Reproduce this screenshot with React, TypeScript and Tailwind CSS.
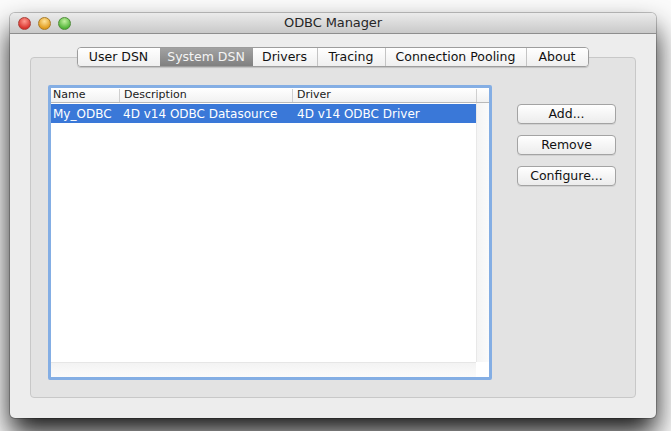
import React from "react";

const font = { fontFamily: '"DejaVu Sans", "Lucida Grande", sans-serif' };

function Light({ from, to, border }: { from: string; to: string; border: string }) {
  return (
    <div
      className="w-[13px] h-[13px] rounded-full"
      style={{
        background: `radial-gradient(circle at 50% 30%, ${from} 0%, ${to} 75%)`,
        border: `1px solid ${border}`,
      }}
    />
  );
}

const tabs = ["User DSN", "System DSN", "Drivers", "Tracing", "Connection Pooling", "About"];
const tabW = [82, 93, 64, 68, 141, 62];

export default function App() {
  return (
    <div className="w-[671px] h-[431px] overflow-hidden bg-[#fbfbfb] relative" style={font}>
      <div className="absolute left-[10px] top-[13px] w-[646px] h-[405px] rounded-[5px] bg-[#ededed] shadow-[0_16px_28px_rgba(0,0,0,0.9),0_0_0_1px_rgba(0,0,0,0.22)] flex flex-col overflow-hidden">
        {/* title bar */}
        <div className="h-[21px] shrink-0 relative flex items-center justify-center bg-gradient-to-b from-[#ebebeb] to-[#c9c9c9] border-b border-[#8e8e8e]">
          <div className="absolute left-[8px] top-[4px] flex gap-[7px]">
            <Light from="#ff9a8f" to="#d8302a" border="#a84038" />
            <Light from="#ffe39a" to="#e09a1a" border="#a77a28" />
            <Light from="#c2f0a0" to="#4fb336" border="#4f8a3a" />
          </div>
          <span className="text-[13px] text-[#262626] tracking-[-0.1px]">ODBC Manager</span>
        </div>
        {/* content */}
        <div className="flex-1 flex flex-col px-[20px] pt-[13px] pb-[20px]">
          <div className="relative z-10 self-center flex h-[20px] rounded-[4px] border border-[#9d9d9d] overflow-hidden shadow-[0_1px_1px_rgba(0,0,0,0.15)] -ml-[1px]">
            {tabs.map((t, i) => {
              const sel = i === 1;
              const sep = i > 0 && i !== 2 && i !== 1;
              return (
                <div
                  key={t}
                  className={
                    "flex items-center justify-center text-[12.5px] leading-none " +
                    (sel
                      ? "bg-gradient-to-b from-[#a2a2a2] to-[#808080] text-[#f4f4f4]"
                      : "bg-gradient-to-b from-[#ffffff] to-[#efefef] text-[#111111]") +
                    (sep ? " border-l border-[#c4c4c4]" : "")
                  }
                  style={{ width: tabW[i] }}
                >
                  {t}
                </div>
              );
            })}
          </div>
          <div className="-mt-[10px] flex-1 rounded-[4px] border border-[#c8c8c8] bg-[#e3e3e3] flex pt-[27px] pl-[17px] pb-[17px]">
            {/* list */}
            <div className="w-[444px] h-[295px] rounded-[2px] border-[3px] border-[#84aee4] bg-white flex flex-col relative">
              <div className="flex h-[15px] border-b border-[#b9b9b9] bg-gradient-to-b from-[#ffffff] to-[#f1f1f1] text-[11px] text-[#1a1a1a] items-center">
                <div className="w-[68px] pl-[2px]">Name</div>
                <div className="w-[173px] pl-[4px] border-l border-[#cfcfcf] h-[13px] flex items-center">Description</div>
                <div className="w-[184px] pl-[4px] border-l border-[#cfcfcf] h-[13px] flex items-center">Driver</div>
                <div className="flex-1 border-l border-[#cfcfcf] h-[13px]" />
              </div>
              <div className="flex-1 flex">
                <div className="w-[425px] flex flex-col">
                  <div className="h-[19px] mt-[1px] bg-[#3a78d8] flex items-center text-[12px] text-white">
                    <div className="w-[68px] pl-[2px] whitespace-nowrap">My_ODBC</div>
                    <div className="w-[174px] pl-[4px] whitespace-nowrap">4D v14 ODBC Datasource</div>
                    <div className="flex-1 pl-[4px] whitespace-nowrap">4D v14 ODBC Driver</div>
                  </div>
                  <div className="flex-1" />
                  <div className="h-[15px] border-t border-[#e6e6e6] bg-gradient-to-b from-[#f3f3f3] to-[#fbfbfb]" />
                </div>
                <div className="flex-1 flex flex-col">
                  <div className="flex-1 border-l border-[#e8e8e8] bg-gradient-to-r from-[#f4f4f4] to-[#fbfbfb]" />
                  <div className="h-[15px] bg-white" />
                </div>
              </div>
            </div>
            {/* buttons */}
            <div className="ml-[25px] pt-[19px] flex flex-col gap-[11px]">
              {["Add...", "Remove", "Configure..."].map((b) => (
                <div
                  key={b}
                  className="w-[99px] h-[20px] rounded-[4px] border border-[#a3a3a3] bg-gradient-to-b from-[#ffffff] to-[#ececec] shadow-[0_1px_0_rgba(0,0,0,0.08)] flex items-center justify-center text-[12.5px] text-[#111111]"
                >
                  {b}
                </div>
              ))}
            </div>
          </div>
        </div>
      </div>
    </div>
  );
}
